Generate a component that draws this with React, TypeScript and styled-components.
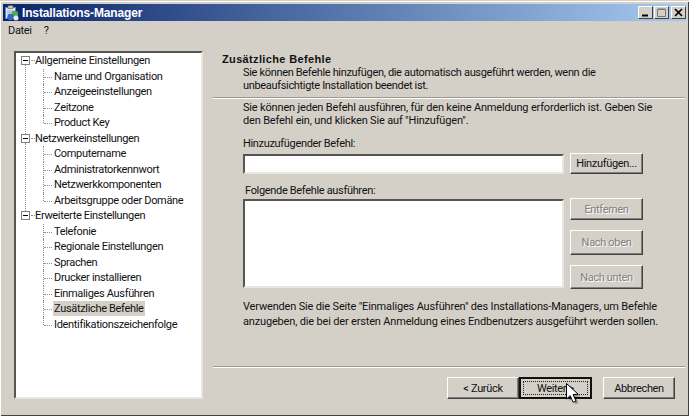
import { createGlobalStyle } from 'styled-components'
import styled from 'styled-components'

const GlobalStyle = createGlobalStyle`
  html, body {
    margin: 0;
    padding: 0;
    background: #fff;
  }
  body {
    font-family: Roboto, 'Liberation Sans', Arial, sans-serif;
    font-size: 11px;
    letter-spacing: -0.33px;
    color: #111;
  }
`

const treeGroups = [
  {
    title: 'Allgemeine Einstellungen',
    items: ['Name und Organisation', 'Anzeigeeinstellungen', 'Zeitzone', 'Product Key'],
  },
  {
    title: 'Netzwerkeinstellungen',
    items: ['Computername', 'Administratorkennwort', 'Netzwerkkomponenten', 'Arbeitsgruppe oder Domäne'],
  },
  {
    title: 'Erweiterte Einstellungen',
    items: [
      'Telefonie',
      'Regionale Einstellungen',
      'Sprachen',
      'Drucker installieren',
      'Einmaliges Ausführen',
      'Zusätzliche Befehle',
      'Identifikationszeichenfolge',
    ],
  },
]

const AppIcon = () => (
  <svg width='16' height='16' viewBox='0 0 16 16'>
    <rect x='1.500' y='2.500' width='10' height='11' fill='#dfe8f6' stroke='#6a7fa8' />
    <rect x='4' y='0.500' width='5' height='3' fill='#c8c8c8' stroke='#555' strokeWidth='0.600' />
    <path d='M3 6h7M3 8h5' stroke='#8fa3c8' />
    <circle cx='11' cy='9' r='3.200' fill='#4fa84a' />
    <circle cx='6.500' cy='12' r='3.200' fill='#2f68c8' />
    <circle cx='12' cy='13' r='2.500' fill='#e8e8f0' />
  </svg>
)

const Expander = () => (
  <svg width='9' height='9' viewBox='0 0 9 9'>
    <rect x='0.500' y='0.500' width='8' height='8' fill='#fff' stroke='#808080' />
    <path d='M2 4.500h5' stroke='#000' />
  </svg>
)

const Cursor = () => (
  <svg width='18' height='25' viewBox='0 0 18 25'>
    <path d='M4 3l0 15 3.600-3.200 2.800 6.400 3-1.300-2.800-6.200 4.900-.4z' fill='#000' opacity='0.3' />
    <path d='M1.500 .5v15.500l3.700-3.300 2.900 6.600 2.900-1.300-2.900-6.400 5-.4z' fill='#fff' stroke='#000' />
  </svg>
)

const App = () => {
  return (
    <>
      <GlobalStyle />
      <StyledWindow>
        <StyledTitleBar>
          <AppIcon />
          <StyledTitle>Installations-Manager</StyledTitle>
          <StyledCaptionButtons>
            <StyledCaptionButton>
              <svg width='9' height='9' viewBox='0 0 9 9'>
                <path d='M1 7.500h6' stroke='#000' strokeWidth='2' />
              </svg>
            </StyledCaptionButton>
            <StyledCaptionButton>
              <svg width='10' height='9' viewBox='0 0 10 9'>
                <path d='M.5 1.500h8v7h-8zM.5 1h8' fill='none' stroke='#777' />
              </svg>
            </StyledCaptionButton>
            <StyledCaptionButton $gap>
              <svg width='9' height='9' viewBox='0 0 9 9'>
                <path d='M1 1l7 7M8 1L1 8' stroke='#000' strokeWidth='1.700' />
              </svg>
            </StyledCaptionButton>
          </StyledCaptionButtons>
        </StyledTitleBar>

        <StyledMenuBar>
          <span>Datei</span>
          <span>?</span>
        </StyledMenuBar>

        <StyledBody>
          <StyledTree>
            {treeGroups.map((group, groupIndex) => (
              <StyledTreeGroup key={group.title} $showTrunk={groupIndex < treeGroups.length - 1}>
                <StyledTreeRow>
                  <StyledExpanderSlot>
                    <Expander />
                  </StyledExpanderSlot>
                  <StyledTreeLabel>{group.title}</StyledTreeLabel>
                </StyledTreeRow>
                {group.items.map((item, itemIndex) => (
                  <StyledTreeChild key={item} $last={itemIndex === group.items.length - 1}>
                    <StyledTreeLabel $selected={item === 'Zusätzliche Befehle'}>{item}</StyledTreeLabel>
                  </StyledTreeChild>
                ))}
              </StyledTreeGroup>
            ))}
          </StyledTree>

          <StyledPage>
            <StyledHeader>
              <StyledHeading>Zusätzliche Befehle</StyledHeading>
              <StyledHeaderText>
                Sie können Befehle hinzufügen, die automatisch ausgeführt werden, wenn die
                <br />
                unbeaufsichtigte Installation beendet ist.
              </StyledHeaderText>
            </StyledHeader>
            <StyledSeparator />

            <StyledContent>
              <StyledParagraph>
                Sie können jeden Befehl ausführen, für den keine Anmeldung erforderlich ist. Geben Sie
                <br />
                den Befehl ein, und klicken Sie auf "Hinzufügen".
              </StyledParagraph>

              <StyledFieldLabel>Hinzuzufügender Befehl:</StyledFieldLabel>
              <StyledInputRow>
                <StyledInput />
                <StyledButton $width={73} $height={21}>Hinzufügen...</StyledButton>
              </StyledInputRow>

              <StyledListLabel>Folgende Befehle ausführen:</StyledListLabel>
              <StyledListRow>
                <StyledListBox />
                <StyledSideButtons>
                  <StyledButton $width={73} $height={22} $disabled>Entfernen</StyledButton>
                  <StyledButton $width={73} $height={25} $disabled>Nach oben</StyledButton>
                  <StyledButton $width={73} $height={24} $disabled>Nach unten</StyledButton>
                </StyledSideButtons>
              </StyledListRow>

              <StyledNote>
                Verwenden Sie die Seite "Einmaliges Ausführen" des Installations-Managers, um Befehle
                <br />
                anzugeben, die bei der ersten Anmeldung eines Endbenutzers ausgeführt werden sollen.
              </StyledNote>
            </StyledContent>

            <StyledFooterSeparator />
            <StyledFooter>
              <StyledButton $width={72} $height={22}>&lt; Zurück</StyledButton>
              <StyledDefaultButton>
                Weiter &gt;
                <StyledCursor>
                  <Cursor />
                </StyledCursor>
              </StyledDefaultButton>
              <StyledCancel>
                <StyledButton $width={72} $height={22}>Abbrechen</StyledButton>
              </StyledCancel>
            </StyledFooter>
          </StyledPage>
        </StyledBody>
      </StyledWindow>
    </>
  )
}

export default App

const StyledWindow = styled.div`
  width: 689px;
  height: 416px;
  box-sizing: border-box;
  padding: 3px 3px 3px 3px;
  background: #d4d0c8;
  border-top: 1px solid #d4d0c8;
  box-shadow: inset 1px 1px 0 #fff, inset -1px -1px 0 #404040;
  display: flex;
  flex-direction: column;
  overflow: hidden;
`
const StyledTitleBar = styled.div`
  height: 17px;
  flex: none;
  display: flex;
  align-items: center;
  padding: 0 0 0 1px;
  gap: 2px;
  background: linear-gradient(90deg, #0a246a, #a6caf0);
`
const StyledTitle = styled.span`
  font-family: 'Liberation Sans', Arial, sans-serif;
  font-size: 12px;
  font-weight: 700;
  letter-spacing: -0.15px;
  color: #fff;
`
const StyledCaptionButtons = styled.div`
  margin-left: auto;
  display: flex;
  gap: 1px;
`
const StyledCaptionButton = styled.div<{ $gap?: boolean }>`
  width: 15px;
  height: 13px;
  box-sizing: border-box;
  margin-left: ${({ $gap }) => ($gap ? '1px' : '0')};
  background: #d4d0c8;
  border: 1px solid;
  border-color: #fff #404040 #404040 #fff;
  display: flex;
  align-items: center;
  justify-content: center;
`
const StyledMenuBar = styled.div`
  height: 19px;
  flex: none;
  display: flex;
  align-items: center;
  gap: 12px;
  padding-left: 5px;
`
const StyledBody = styled.div`
  flex: 1;
  display: flex;
  min-height: 0;
`
const StyledTree = styled.div`
  width: 189px;
  height: 348px;
  box-sizing: border-box;
  margin: 11px 0 0 11px;
  padding: 0 0 0 5px;
  background: #fff;
  border: 2px solid;
  border-color: #555 #e8e6e0 #e8e6e0 #555;
  flex: none;
`
const StyledTreeGroup = styled.div<{ $showTrunk: boolean }>`
  position: relative;

  &::before {
    content: '';
    display: ${({ $showTrunk }) => ($showTrunk ? 'block' : 'none')};
    position: absolute;
    left: 4px;
    top: 12px;
    bottom: -3px;
    border-left: 1px dotted #909090;
  }
`
const StyledTreeRow = styled.div`
  height: 15.500px;
  display: flex;
  align-items: center;
`
const StyledExpanderSlot = styled.div`
  width: 9px;
  height: 9px;
  line-height: 0;
  margin-right: 4px;
  position: relative;

  &::after {
    content: '';
    position: absolute;
    left: 10px;
    top: 4px;
    width: 4px;
    border-top: 1px dotted #909090;
  }
`
const StyledTreeChild = styled.div<{ $last: boolean }>`
  height: 15.500px;
  display: flex;
  align-items: center;
  padding-left: 32px;
  position: relative;

  &::before {
    content: '';
    position: absolute;
    left: 22px;
    top: 0;
    height: ${({ $last }) => ($last ? '8px' : '100%')};
    border-left: 1px dotted #909090;
  }
  &::after {
    content: '';
    position: absolute;
    left: 23px;
    top: 8px;
    width: 8px;
    border-top: 1px dotted #909090;
  }
`
const StyledTreeLabel = styled.span<{ $selected?: boolean }>`
  white-space: nowrap;
  padding: 1px 1px;
  background: ${({ $selected }) => ($selected ? '#d4d0c8' : 'transparent')};
`
const StyledPage = styled.div`
  flex: 1;
  min-width: 0;
  display: flex;
  flex-direction: column;
  margin-left: 10px;
`
const StyledHeader = styled.div`
  height: 57px;
  box-sizing: border-box;
  padding: 12px 0 0 9px;
`
const StyledHeading = styled.div`
  font-family: 'Liberation Sans', Arial, sans-serif;
  font-weight: 700;
  font-size: 11px;
  line-height: 14px;
  letter-spacing: 0.35px;
`
const StyledHeaderText = styled.div`
  padding-left: 21px;
  line-height: 13px;
  margin-top: 0;
`
const StyledSeparator = styled.div`
  width: 472px;
  height: 2px;
  flex: none;
  background: linear-gradient(#9a9891 50%, #fff 50%);
`
const StyledContent = styled.div`
  padding: 2px 0 0 30px;
  width: 430px;
`
const StyledParagraph = styled.div`
  line-height: 13px;
  letter-spacing: -0.17px;
  white-space: nowrap;
`
const StyledFieldLabel = styled.div`
  margin-top: 10px;
  line-height: 13px;
`
const StyledInputRow = styled.div`
  display: flex;
  align-items: flex-start;
  gap: 6px;
  margin-top: 3px;
`
const StyledInput = styled.div`
  width: 321px;
  height: 20px;
  box-sizing: border-box;
  background: #fff;
  border: 2px solid;
  border-color: #555 #e8e6e0 #e8e6e0 #555;
  flex: none;
  margin-top: 1px;
`
const StyledListLabel = styled.div`
  margin: 10px 0 0 2px;
  line-height: 13px;
`
const StyledListRow = styled.div`
  display: flex;
  gap: 6px;
  margin-top: 1px;
`
const StyledListBox = styled.div`
  width: 321px;
  height: 89px;
  box-sizing: border-box;
  background: #fff;
  border: 2px solid;
  border-color: #555 #e8e6e0 #e8e6e0 #555;
  flex: none;
  margin-top: 1px;
`
const StyledSideButtons = styled.div`
  display: flex;
  flex-direction: column;
  gap: 10px;
`
const StyledNote = styled.div`
  margin-top: 10px;
  line-height: 15px;
  letter-spacing: -0.17px;
  white-space: nowrap;
`
const StyledFooterSeparator = styled.div`
  width: 472px;
  height: 2px;
  flex: none;
  margin-top: 37px;
  background: linear-gradient(#9a9891 50%, #fff 50%);
`
const StyledFooter = styled.div`
  display: flex;
  padding: 9px 0 0 234px;
`
const StyledButton = styled.div<{ $width: number; $height: number; $disabled?: boolean }>`
  width: ${({ $width }) => $width}px;
  height: ${({ $height }) => $height}px;
  box-sizing: border-box;
  flex: none;
  display: flex;
  align-items: center;
  justify-content: center;
  background: #d4d0c8;
  border: 1px solid;
  border-color: #fff #404040 #404040 #fff;
  box-shadow: inset -1px -1px 0 #808080;
  color: ${({ $disabled }) => ($disabled ? '#808080' : '#111')};
  text-shadow: ${({ $disabled }) => ($disabled ? '1px 1px 0 #fff' : 'none')};
`
const StyledDefaultButton = styled.div`
  width: 73px;
  height: 22px;
  box-sizing: border-box;
  flex: none;
  position: relative;
  display: flex;
  align-items: center;
  justify-content: center;
  background: #d4d0c8;
  border: 2px solid #111;
  outline: 1px dotted #222;
  outline-offset: -5px;
`
const StyledCursor = styled.div`
  position: absolute;
  left: 44px;
  top: 4px;
  line-height: 0;
`
const StyledCancel = styled.div`
  margin-left: 11px;
`
